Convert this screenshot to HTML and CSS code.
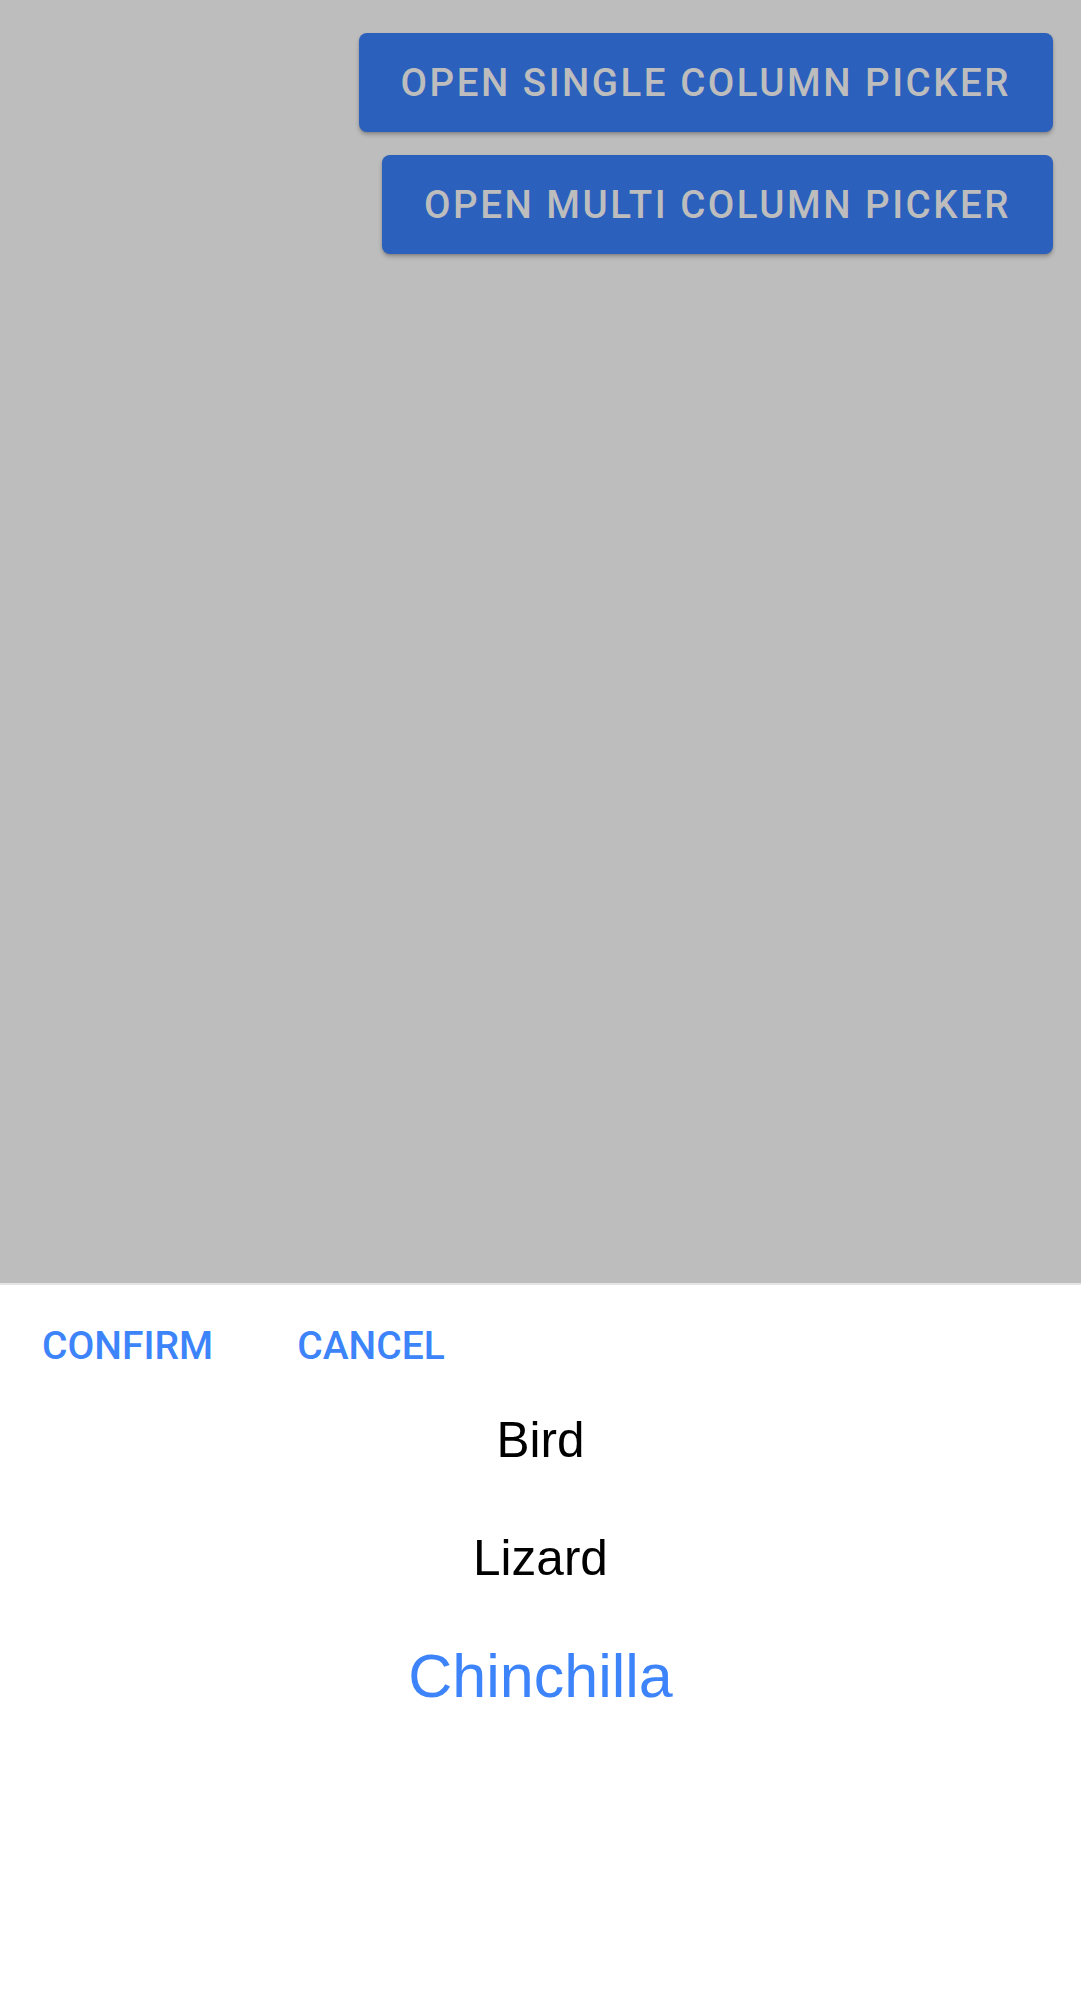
FILE: index.html
```html
<!DOCTYPE html>
<html>
<head>
<meta charset="utf-8">
<link rel="stylesheet" href="styles.css">
</head>
<body>
<div class="screen">
  <div class="backdrop">
    <button class="btn">OPEN SINGLE COLUMN PICKER</button>
    <button class="btn">OPEN MULTI COLUMN PICKER</button>
  </div>
  <div class="panel">
    <div class="toolbar">
      <span class="action">CONFIRM</span>
      <span class="action">CANCEL</span>
    </div>
    <div class="wheel">
      <div class="item">Bird</div>
      <div class="item">Lizard</div>
      <div class="item selected">Chinchilla</div>
    </div>
  </div>
</div>
</body>
</html>
```
FILE: styles.css
```css
html, body {
  margin: 0;
  padding: 0;
  background: #ffffff;
}

.screen {
  height: 1999px;
  display: flex;
  flex-direction: column;
  overflow: hidden;
}

.backdrop {
  flex: 1;
  background: #bdbdbd;
  padding: 33px 28px 0 0;
  display: flex;
  flex-direction: column;
  align-items: flex-end;
  gap: 23px;
}

.btn {
  height: 99px;
  padding: 0 42px;
  border: none;
  border-radius: 8px;
  background: #2c60bd;
  color: #bdbdbd;
  font-family: Roboto, "Liberation Sans", sans-serif;
  font-weight: 500;
  font-size: 38.5px;
  letter-spacing: 2.5px;
  box-shadow: 0 3px 4px rgba(0, 0, 0, 0.22), 0 1px 2px rgba(0, 0, 0, 0.12);
}

.panel {
  height: 714px;
  flex: none;
  border-top: 2px solid #e4e4e4;
  background: #ffffff;
}

.toolbar {
  display: flex;
  gap: 84px;
  padding: 37px 0 11px 42px;
  height: 48px;
  line-height: 48px;
  font-family: Roboto, "Liberation Sans", sans-serif;
  font-weight: 500;
  font-size: 39px;
  color: #3d84fb;
}

.wheel {
  display: flex;
  flex-direction: column;
}

.item {
  height: 118px;
  line-height: 118px;
  text-align: center;
  font-family: "Liberation Sans", Arial, sans-serif;
  font-size: 49.5px;
  color: #000000;
}

.item.selected {
  font-size: 61px;
  color: #3d84fb;
}
```
